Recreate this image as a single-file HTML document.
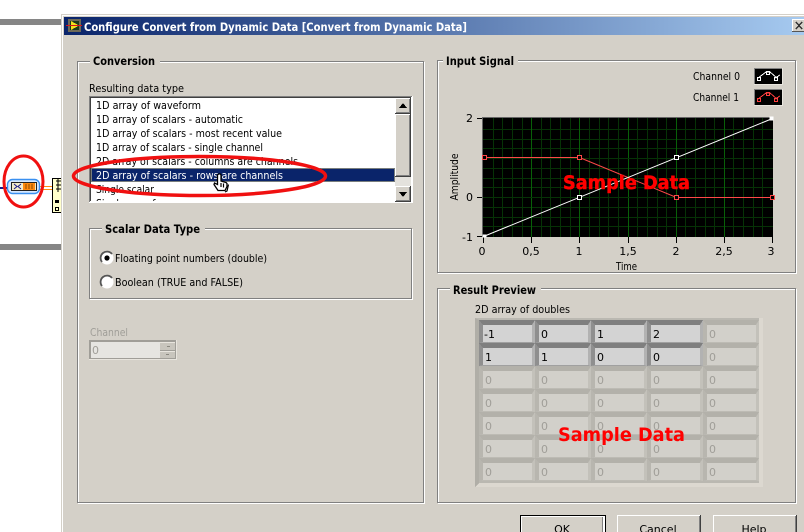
<!DOCTYPE html>
<html><head><meta charset="utf-8"><style>
html,body{margin:0;padding:0;background:#fff;width:804px;height:532px;overflow:hidden}
svg{display:block;font-family:"DejaVu Sans","Liberation Sans",sans-serif;font-size:11px}
.c{shape-rendering:crispEdges}
.b{font-weight:bold;font-size:11.5px}
.d{fill:#a09e98}
.s{font-size:19px;font-weight:bold;fill:#ff0000}
</style></head><body>
<svg width="804" height="532" viewBox="0 0 804 532" xmlns="http://www.w3.org/2000/svg">
<defs>
<linearGradient id="tb" x1="0" x2="1" y1="0" y2="0"><stop offset="0" stop-color="#0a246a"/><stop offset="1" stop-color="#a6caf0"/></linearGradient>
<clipPath id="lc"><rect x="91" y="98" width="304" height="103"/></clipPath>
<g id="ca" class="c"><polygon points="0,0 56,0 53,5 4,5" fill="#7f7f7f"/><polygon points="0,0 4,5 4,22 0,23" fill="#8f8f8f"/><polygon points="56,0 53,5 53,22 56,23" fill="#b2b2b2"/><polygon points="0,23 4,22 53,22 56,23" fill="#a0a0a0"/><rect x="4" y="5" width="49" height="17" fill="#d3d3d3"/></g>
<g id="cd" class="c"><polygon points="0,0 56,0 53,5 4,5" fill="#b3b1aa"/><polygon points="0,0 4,5 4,22 0,23" fill="#b8b6af"/><polygon points="56,0 53,5 53,22 56,23" fill="#c3c1ba"/><polygon points="0,23 4,22 53,22 56,23" fill="#bdbbb4"/><rect x="4" y="5" width="49" height="17" fill="#d2d0ca"/></g>
</defs>

<g class="c">
<rect x="0" y="19" width="61" height="6" fill="#868686"/>
<rect x="0" y="244" width="61" height="6" fill="#868686"/>
<rect x="0" y="187" width="9" height="2" fill="#1a1a8c"/>
<rect x="40" y="186" width="13" height="1" fill="#ff8a10"/><rect x="40" y="189" width="13" height="1" fill="#ff8a10"/>
<rect x="52.500" y="178.500" width="10" height="34" fill="#ffffcc" stroke="#000"/>
<path d="M56 181h6M56 185h6M56 189h6M58 179v13" stroke="#000" fill="none"/>
<rect x="55" y="200" width="4" height="3" fill="#000"/>
<rect x="55.500" y="207.500" width="3" height="3" fill="none" stroke="#000"/>
</g>
<rect x="7.500" y="179.500" width="32" height="14" rx="5" fill="#d6e8ff" stroke="#3a90f0" stroke-width="1.400"/>
<rect x="11.500" y="182.500" width="25" height="8" fill="#f2eccb" stroke="#222"/>
<path d="M14 184l3 2.500-3 2.500M21 184l-3 2.500 3 2.500" stroke="#1a1a8c" fill="none"/>
<rect class="c" x="23" y="183" width="12" height="7" fill="#ff8a10"/>
<path class="c" d="M26 184v5M29 184v5M32 184v5" stroke="#8a4a00"/>

<!-- dialog -->
<g class="c">
<rect x="61" y="14" width="743" height="518" fill="#d4d0c8"/>
<rect x="62" y="15" width="742" height="1" fill="#fff"/>
<rect x="62" y="15" width="1" height="517" fill="#fff"/>
<rect x="64" y="17" width="740" height="18" fill="url(#tb)"/>
<rect x="792" y="19" width="12" height="13" fill="#d4d0c8"/>
<rect x="792" y="19" width="12" height="1" fill="#fff"/>
<rect x="792" y="19" width="1" height="13" fill="#fff"/>
<rect x="792" y="31" width="12" height="1" fill="#555"/>
<path d="M796 22l6 7M802 22l-6 7" stroke="#333" stroke-width="1.500" fill="none"/>
<rect x="68" y="19" width="13" height="13" fill="#6e6a58"/>
<rect x="70" y="21" width="9" height="9" fill="#1c3a1c"/>
<polygon points="71,21 79,25.500 71,30" fill="#f4e01c"/>
<rect x="66" y="25" width="16" height="1" fill="#d8141a"/>
</g>
<text x="84" y="31" fill="#fff" class="b" textLength="383" lengthAdjust="spacingAndGlyphs">Configure Convert from Dynamic Data [Convert from Dynamic Data]</text>

<!-- group boxes -->
<g class="c" fill="none">
<rect x="78.500" y="62.500" width="346" height="441" stroke="#fff"/><rect x="77.500" y="61.500" width="346" height="441" stroke="#808080"/>
<rect x="90" y="58" width="70" height="8" fill="#d4d0c8"/>
<rect x="90.500" y="229.500" width="322" height="70" stroke="#fff"/><rect x="89.500" y="228.500" width="322" height="70" stroke="#808080"/>
<rect x="102" y="225" width="103" height="8" fill="#d4d0c8"/>
<rect x="438.500" y="61.500" width="358" height="212" stroke="#fff"/><rect x="437.500" y="60.500" width="358" height="212" stroke="#808080"/>
<rect x="443" y="57" width="75" height="8" fill="#d4d0c8"/>
<rect x="438.500" y="289.500" width="358" height="214" stroke="#fff"/><rect x="437.500" y="288.500" width="358" height="214" stroke="#808080"/>
<rect x="450" y="285" width="91" height="8" fill="#d4d0c8"/>
</g>
<text x="93" y="65" class="b" textLength="62" lengthAdjust="spacingAndGlyphs">Conversion</text>
<text x="105" y="233" class="b" textLength="95" lengthAdjust="spacingAndGlyphs">Scalar Data Type</text>
<text x="446" y="65" class="b" textLength="68" lengthAdjust="spacingAndGlyphs">Input Signal</text>
<text x="453" y="294" class="b" textLength="83" lengthAdjust="spacingAndGlyphs">Result Preview</text>

<!-- list -->
<text x="89" y="92" textLength="95" lengthAdjust="spacingAndGlyphs">Resulting data type</text>
<g class="c">
<rect x="89" y="96" width="324" height="107" fill="#fff"/>
<rect x="89" y="96" width="323" height="1" fill="#808080"/><rect x="89" y="97" width="322" height="1" fill="#404040"/>
<rect x="89" y="96" width="1" height="106" fill="#808080"/><rect x="90" y="97" width="1" height="104" fill="#404040"/>
<rect x="89" y="202" width="324" height="1" fill="#fff"/>
<rect x="91" y="168" width="304" height="14" fill="#0a246a"/>
<rect x="91.500" y="168.500" width="303" height="13" fill="none" stroke="#e8d890" stroke-dasharray="1 1"/>
</g>
<g clip-path="url(#lc)">
<text x="96" y="109" textLength="105" lengthAdjust="spacingAndGlyphs">1D array of waveform</text>
<text x="96" y="123" textLength="147" lengthAdjust="spacingAndGlyphs">1D array of scalars - automatic</text>
<text x="96" y="137" textLength="186" lengthAdjust="spacingAndGlyphs">1D array of scalars - most recent value</text>
<text x="96" y="151" textLength="167" lengthAdjust="spacingAndGlyphs">1D array of scalars - single channel</text>
<text x="96" y="165" textLength="202" lengthAdjust="spacingAndGlyphs">2D array of scalars - columns are channels</text>
<text x="96" y="179" fill="#fff" textLength="187" lengthAdjust="spacingAndGlyphs">2D array of scalars - rows are channels</text>
<text x="96" y="193" textLength="58" lengthAdjust="spacingAndGlyphs">Single scalar</text>
<text x="96" y="207" textLength="78" lengthAdjust="spacingAndGlyphs">Single waveform</text>
</g>
<!-- scrollbar -->
<g class="c">
<rect x="395" y="98" width="16" height="103" fill="#dedcd7"/>
<rect x="395" y="177" width="16" height="9" fill="#e4e2dd"/>
<rect x="395" y="98" width="16" height="16" fill="#404040"/><rect x="395" y="98" width="15" height="15" fill="#fff"/><rect x="396" y="99" width="14" height="14" fill="#808080"/><rect x="396" y="99" width="13" height="13" fill="#d4d0c8"/>
<rect x="395" y="114" width="16" height="63" fill="#404040"/><rect x="395" y="114" width="15" height="62" fill="#fff"/><rect x="396" y="115" width="14" height="61" fill="#808080"/><rect x="396" y="115" width="13" height="60" fill="#d4d0c8"/>
<rect x="395" y="186" width="16" height="16" fill="#404040"/><rect x="395" y="186" width="15" height="15" fill="#fff"/><rect x="396" y="187" width="14" height="14" fill="#808080"/><rect x="396" y="187" width="13" height="13" fill="#d4d0c8"/>
<polygon points="403,103 399,108 407,108" fill="#000"/>
<polygon points="399,192 407,192 403,197" fill="#000"/>
</g>

<!-- radios -->
<circle cx="107" cy="258" r="6" fill="#fff" stroke="#fff"/><path d="M102 262a6 6 0 0 1 10-8" stroke="#555" fill="none" stroke-width="1.800"/><circle cx="107" cy="258" r="2.600" fill="#000"/>
<circle cx="107" cy="282" r="6" fill="#fff" stroke="#fff"/><path d="M102 286a6 6 0 0 1 10-8" stroke="#555" fill="none" stroke-width="1.800"/>
<text x="115" y="262" textLength="152" lengthAdjust="spacingAndGlyphs">Floating point numbers (double)</text>
<text x="115" y="286" textLength="128" lengthAdjust="spacingAndGlyphs">Boolean (TRUE and FALSE)</text>

<!-- channel -->
<text x="90" y="336" class="d" textLength="38" lengthAdjust="spacingAndGlyphs">Channel</text>
<g class="c">
<rect x="89" y="340" width="88" height="20" fill="#e8e5de"/>
<rect x="89" y="340" width="87" height="19" fill="#a09e98"/>
<rect x="91" y="342" width="69" height="16" fill="#e6e5e1"/>
<rect x="160" y="342" width="15" height="8" fill="#c8c5bd"/><rect x="160" y="342" width="15" height="1" fill="#e8e5de"/>
<rect x="160" y="351" width="15" height="7" fill="#c8c5bd"/><rect x="160" y="351" width="15" height="1" fill="#e8e5de"/>
<rect x="167" y="346" width="3" height="1" fill="#8a8880"/><rect x="166" y="354" width="3" height="1" fill="#8a8880"/>
</g>
<text x="92" y="354" class="d">0</text>

<!-- legend -->
<text x="693" y="80" textLength="47" lengthAdjust="spacingAndGlyphs">Channel 0</text>
<text x="693" y="101" textLength="46" lengthAdjust="spacingAndGlyphs">Channel 1</text>
<g class="c">
<rect x="754" y="68" width="29" height="17" fill="#e8e5de"/><rect x="754" y="68" width="28" height="16" fill="#808080"/><rect x="755" y="69" width="27" height="15" fill="#000"/>
<rect x="754" y="89" width="29" height="17" fill="#e8e5de"/><rect x="754" y="89" width="28" height="16" fill="#808080"/><rect x="755" y="90" width="27" height="15" fill="#000"/>
<path d="M758 78l8-6h4l7 6M775 78l5-3" stroke="#fff" fill="none"/>
<path d="M758 99l8-6h4l7 6M775 99l5-3" stroke="#ff4040" fill="none"/>
<rect x="757.500" y="77.500" width="3" height="3" fill="none" stroke="#fff"/><rect x="766.500" y="71.500" width="3" height="3" fill="none" stroke="#fff"/><rect x="774.500" y="77.500" width="3" height="3" fill="none" stroke="#fff"/>
<rect x="757.500" y="98.500" width="3" height="3" fill="none" stroke="#ff4040"/><rect x="766.500" y="92.500" width="3" height="3" fill="none" stroke="#ff4040"/><rect x="774.500" y="98.500" width="3" height="3" fill="none" stroke="#ff4040"/>
</g>

<!-- plot -->
<g class="c">
<rect x="482" y="117" width="291" height="120" fill="#000"/>
<rect x="482" y="117" width="291" height="1" fill="#666"/><rect x="482" y="117" width="1" height="120" fill="#666"/>
<path d="M493.500 118V237M502.500 118V237M512.500 118V237M522.500 118V237M541.500 118V237M550.500 118V237M560.500 118V237M570.500 118V237M589.500 118V237M599.500 118V237M608.500 118V237M618.500 118V237M637.500 118V237M647.500 118V237M657.500 118V237M666.500 118V237M685.500 118V237M695.500 118V237M705.500 118V237M714.500 118V237M733.500 118V237M743.500 118V237M753.500 118V237M762.500 118V237M483 129.500H773M483 139.500H773M483 148.500H773M483 168.500H773M483 178.500H773M483 187.500H773M483 207.500H773M483 217.500H773M483 226.500H773" stroke="#063206" fill="none"/>
<path d="M531.500 118V237M579.500 118V237M628.500 118V237M676.500 118V237M724.500 118V237" stroke="#086008" fill="none"/>
<path d="M483 158.500H773M483 197.500H773" stroke="#063206" fill="none"/>
<path d="M477 118.500h5M477 197.500h5M477 236.500h5M483.500 237v6M531.500 237v6M579.500 237v6M628.500 237v6M676.500 237v6M724.500 237v6M772.500 237v6" stroke="#000" fill="none"/>
</g>
<path d="M483.500 157.500H579.500L676.500 197.500H772.500" fill="none" stroke="#ff4848"/>
<path d="M483.500 236.500L772.500 118.500" fill="none" stroke="#fff"/>
<g class="c" fill="none">
<g stroke="#ff4848"><rect x="482.500" y="155.500" width="4" height="4" fill="#000"/><rect x="577.500" y="155.500" width="4" height="4" fill="#000"/><rect x="674.500" y="195.500" width="4" height="4" fill="#000"/><rect x="770.500" y="195.500" width="4" height="4" fill="#000"/></g>
<g stroke="#fff"><rect x="577.500" y="195.500" width="4" height="4" fill="#000"/><rect x="674.500" y="155.500" width="4" height="4" fill="#000"/><rect x="770" y="117" width="3" height="3" fill="#fff"/><rect x="483" y="235" width="3" height="2" fill="#fff"/></g>
</g>
<text x="473" y="122" text-anchor="end">2</text>
<text x="473" y="201" text-anchor="end">0</text>
<text x="473" y="241" text-anchor="end">-1</text>
<g text-anchor="middle">
<text x="482" y="255">0</text><text x="531" y="255">0,5</text><text x="579" y="255">1</text><text x="628" y="255">1,5</text><text x="676" y="255">2</text><text x="724" y="255">2,5</text><text x="771" y="255">3</text>
</g>
<text x="616" y="270" textLength="21" lengthAdjust="spacingAndGlyphs">Time</text>
<text transform="translate(458 200.500) rotate(-90)" textLength="47" lengthAdjust="spacingAndGlyphs">Amplitude</text>
<text x="563" y="189" class="s" stroke="#ff0000" stroke-width=".5" textLength="127" lengthAdjust="spacingAndGlyphs">Sample Data</text>

<!-- array -->
<text x="475" y="313" textLength="95" lengthAdjust="spacingAndGlyphs">2D array of doubles</text>
<g class="c">
<rect x="475" y="318" width="288" height="169" fill="#bab8b1"/>
<polygon points="759,318 763,318 763,487 475,487 479,483 759,483" fill="#dcd8d0"/>
<polygon points="475,318 479,320 479,483 475,487" fill="#b0aea7"/>
</g>
<use href="#ca" x="479" y="320"/><use href="#ca" x="535" y="320"/><use href="#ca" x="591" y="320"/><use href="#ca" x="647" y="320"/><use href="#cd" x="703" y="320"/>
<use href="#ca" x="479" y="343"/><use href="#ca" x="535" y="343"/><use href="#ca" x="591" y="343"/><use href="#ca" x="647" y="343"/><use href="#cd" x="703" y="343"/>
<use href="#cd" x="479" y="366"/><use href="#cd" x="535" y="366"/><use href="#cd" x="591" y="366"/><use href="#cd" x="647" y="366"/><use href="#cd" x="703" y="366"/>
<use href="#cd" x="479" y="389"/><use href="#cd" x="535" y="389"/><use href="#cd" x="591" y="389"/><use href="#cd" x="647" y="389"/><use href="#cd" x="703" y="389"/>
<use href="#cd" x="479" y="412"/><use href="#cd" x="535" y="412"/><use href="#cd" x="591" y="412"/><use href="#cd" x="647" y="412"/><use href="#cd" x="703" y="412"/>
<use href="#cd" x="479" y="435"/><use href="#cd" x="535" y="435"/><use href="#cd" x="591" y="435"/><use href="#cd" x="647" y="435"/><use href="#cd" x="703" y="435"/>
<use href="#cd" x="479" y="458"/><use href="#cd" x="535" y="458"/><use href="#cd" x="591" y="458"/><use href="#cd" x="647" y="458"/><use href="#cd" x="703" y="458"/>
<text x="484" y="338">-1</text><text x="541" y="338">0</text><text x="597" y="338">1</text><text x="653" y="338">2</text><text x="709" y="338" class="d">0</text>
<text x="485" y="361">1</text><text x="541" y="361">1</text><text x="597" y="361">0</text><text x="653" y="361">0</text><text x="709" y="361" class="d">0</text>
<g class="d">
<text x="485" y="384">0</text><text x="541" y="384">0</text><text x="597" y="384">0</text><text x="653" y="384">0</text><text x="709" y="384">0</text>
<text x="485" y="407">0</text><text x="541" y="407">0</text><text x="597" y="407">0</text><text x="653" y="407">0</text><text x="709" y="407">0</text>
<text x="485" y="430">0</text><text x="541" y="430">0</text><text x="597" y="430">0</text><text x="653" y="430">0</text><text x="709" y="430">0</text>
<text x="485" y="453">0</text><text x="541" y="453">0</text><text x="597" y="453">0</text><text x="653" y="453">0</text><text x="709" y="453">0</text>
<text x="485" y="476">0</text><text x="541" y="476">0</text><text x="597" y="476">0</text><text x="653" y="476">0</text><text x="709" y="476">0</text>
</g>
<text x="558" y="441" class="s" textLength="127" lengthAdjust="spacingAndGlyphs">Sample Data</text>

<!-- buttons -->
<g class="c">
<rect x="520" y="515" width="86" height="17" fill="#000"/><rect x="521" y="516" width="84" height="16" fill="#fff"/><rect x="522" y="517" width="81" height="15" fill="#808080"/><rect x="522" y="517" width="80" height="15" fill="#d4d0c8"/>
<rect x="617" y="515" width="84" height="17" fill="#404040"/><rect x="617" y="515" width="83" height="17" fill="#fff"/><rect x="618" y="516" width="82" height="16" fill="#808080"/><rect x="618" y="516" width="81" height="16" fill="#d4d0c8"/>
<rect x="713" y="515" width="84" height="17" fill="#404040"/><rect x="713" y="515" width="83" height="17" fill="#fff"/><rect x="714" y="516" width="82" height="16" fill="#808080"/><rect x="714" y="516" width="81" height="16" fill="#d4d0c8"/>
</g>
<g text-anchor="middle"><text x="562" y="533">OK</text><text x="658" y="533">Cancel</text><text x="754" y="533">Help</text></g>

<!-- annotations -->
<ellipse cx="199.500" cy="176" rx="126" ry="19.500" fill="none" stroke="#f01010" stroke-width="3.500"/>
<ellipse cx="23.500" cy="181.500" rx="19.500" ry="25.500" fill="none" stroke="#f01010" stroke-width="3"/>
<path d="M217.500 175c1-1.500 3-1.500 3.500 0v6l5 1.500 1 1v3l-2 4h-7l-4-6 .5-1.500 3 1.500z" fill="#fff" stroke="#000" stroke-width="1.300"/>
<path d="M221 183v4M223.500 183.500v4M228.500 184.500l-1.500 6.500-2 1" stroke="#000" fill="none" stroke-width="1.200"/>
</svg>
</body></html>
